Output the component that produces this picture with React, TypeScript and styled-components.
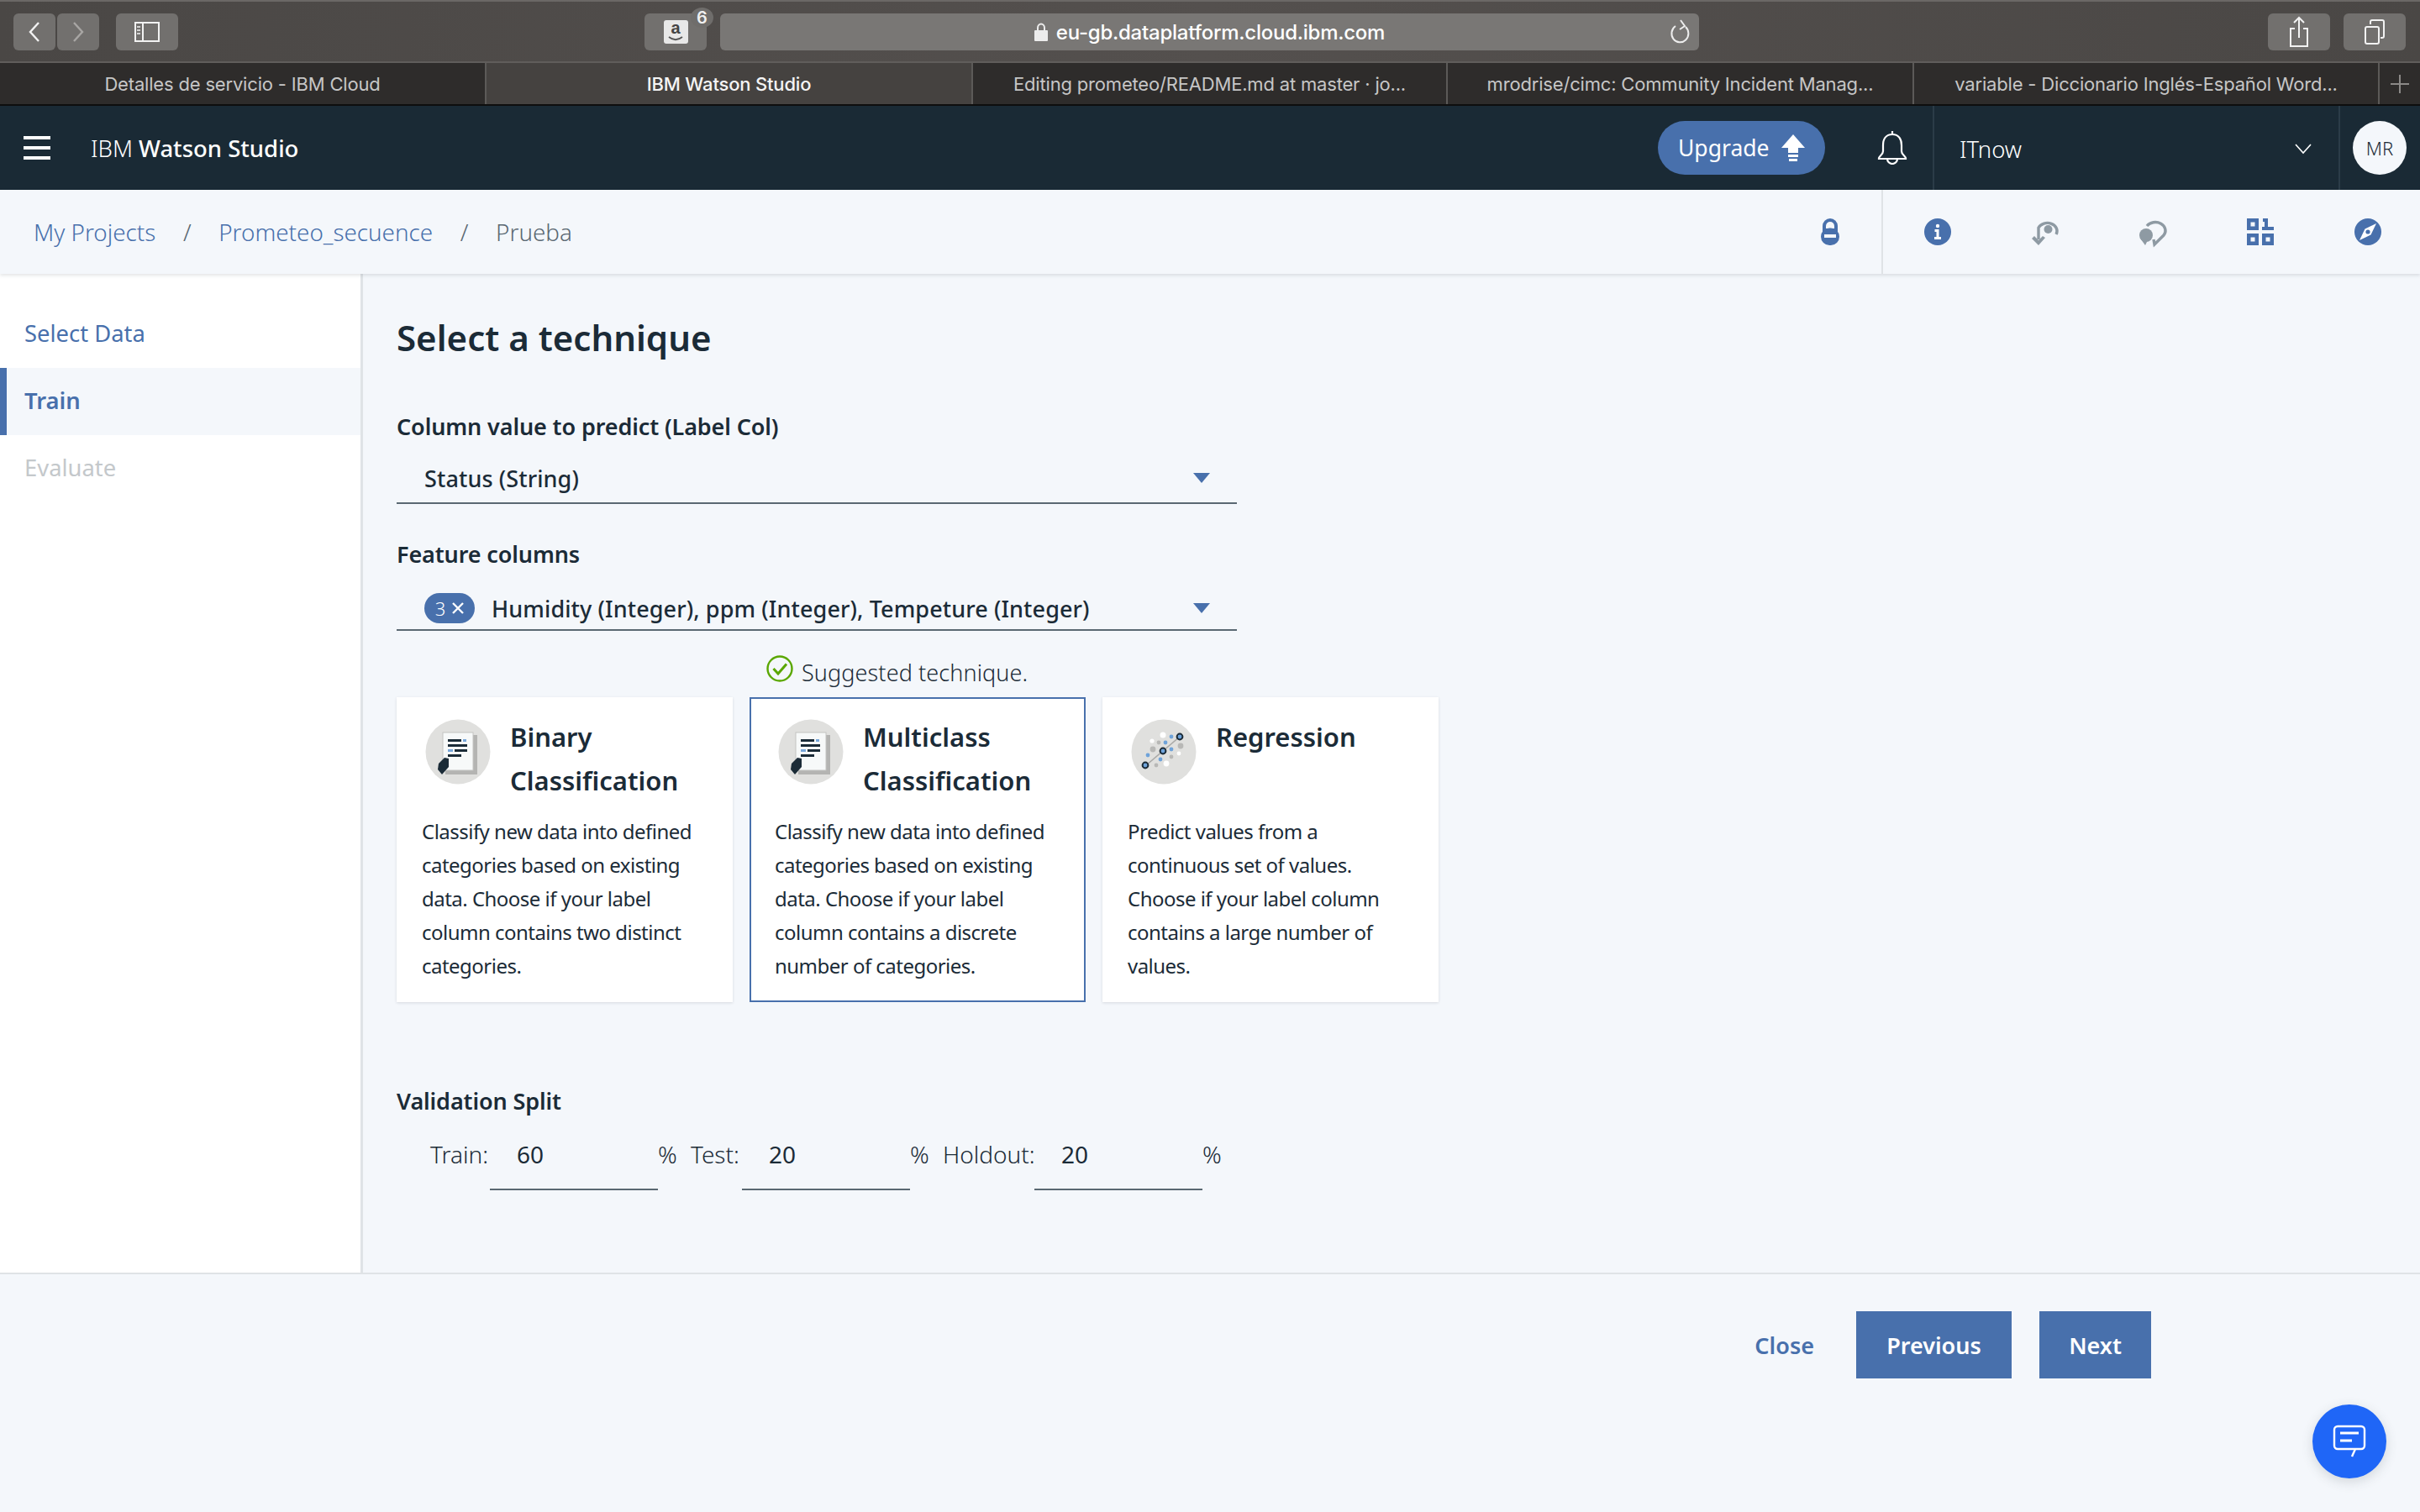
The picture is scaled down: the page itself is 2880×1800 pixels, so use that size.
import React from "react";
import styled, { createGlobalStyle } from "styled-components";

const BLUE = "#4870ac";
const INK = "#1b2b37";
const PLEX = `"Noto Sans", Roboto, "Liberation Sans", sans-serif`;
const UI = `Inter, "Liberation Sans", sans-serif`;

const Global = createGlobalStyle`
  html, body { margin: 0; padding: 0; background: #f4f7fb; }
  * { box-sizing: border-box; }
  svg { flex: none; }
`;

const Page = styled.div`
  position: relative;
  display: flex;
  flex-direction: column;
  height: 100vh;
  overflow: hidden;
  font-family: ${PLEX};
  color: ${INK};
  background: #f4f7fb;
`;

/* ---- browser chrome ---- */
const Toolbar = styled.div`
  height: 75px;
  display: flex;
  align-items: flex-start;
  padding: 16px 17px 0 16px;
  background: linear-gradient(90deg, #4a4745, #54504e 50%, #4a4745);
  border-top: 2px solid #6b6866;
  border-bottom: 2px solid #605d5b;
`;
const ToolButton = styled.div<{ $w: number; $ml?: number }>`
  position: relative;
  width: ${(p) => p.$w}px;
  height: 44px;
  margin-top: -2px;
  margin-left: ${(p) => p.$ml ?? 0}px;
  flex: none;
  display: flex;
  align-items: center;
  justify-content: center;
  border-radius: 6px;
  background: #72706e;
`;
const Counter = styled.span`
  position: absolute;
  top: -7px;
  right: -8px;
  width: 27px;
  height: 24px;
  border-radius: 50%;
  background: #6f6d6b;
  color: #f0f0f0;
  font: 600 20px ${UI};
  display: flex;
  align-items: center;
  justify-content: center;
`;
const AmazonTile = styled.span`
  width: 29px;
  height: 28px;
  border-radius: 3px;
  background: #e8e8e8;
  color: #444;
  font: 700 20px/19px "Liberation Sans", sans-serif;
  display: flex;
  flex-direction: column;
  align-items: center;
`;
const UrlBar = styled.div`
  position: relative;
  flex: 1;
  height: 44px;
  margin: -2px 0 0 16px;
  display: flex;
  align-items: center;
  justify-content: center;
  gap: 10px;
  border-radius: 6px;
  background: #797775;
  color: #fff;
  font: 500 24px ${UI};
  letter-spacing: -0.25px;
`;
const Reload = styled.span`
  position: absolute;
  right: 10px;
  top: 7px;
  display: flex;
`;
const ToolSpacer = styled.div`
  width: 555px;
  flex: none;
  height: 1px;
`;
const TabStrip = styled.div`
  height: 51px;
  display: grid;
  grid-template-columns: 579px 579px 565px 555px 554px 48px;
  background: #2e2c2b;
  border-bottom: 2px solid #0e0e0e;
`;
const Tab = styled.div<{ $active?: boolean }>`
  display: flex;
  align-items: center;
  justify-content: center;
  white-space: nowrap;
  overflow: hidden;
  font: ${(p) => (p.$active ? 500 : 400)} 22px ${UI};
  letter-spacing: -0.18px;
  color: ${(p) => (p.$active ? "#f4f4f4" : "#c6c6c6")};
  background: ${(p) => (p.$active ? "#454240" : "#2e2c2b")};
  border-right: 2px solid #5c5a58;
`;
const PlusTab = styled(Tab)`
  border-right: 0;
`;

/* ---- product bar ---- */
const NavBar = styled.header`
  height: 100px;
  flex: none;
  display: flex;
  align-items: center;
  background: #1a2a35;
  color: #fff;
`;
const Burger = styled.div`
  margin-left: 28px;
  width: 32px;
  display: flex;
  flex-direction: column;
  gap: 8px;
  & > i {
    display: block;
    height: 4px;
    background: #fff;
  }
`;
const Brand = styled.div`
  margin-left: 48px;
  font-size: 27.5px;
  font-weight: 300;
  flex: 1;
  & > b {
    font-weight: 500;
  }
`;
const Upgrade = styled.div`
  width: 199px;
  height: 64px;
  display: flex;
  align-items: center;
  gap: 14px;
  padding-left: 24px;
  border-radius: 32px;
  background: ${BLUE};
  font-size: 26.5px;
  color: #fff;
  flex: none;
`;
const BellCell = styled.div`
  width: 128px;
  height: 100px;
  padding-left: 32px;
  display: flex;
  align-items: center;
  justify-content: center;
  flex: none;
`;
const Account = styled.div`
  width: 485px;
  height: 100px;
  flex: none;
  display: flex;
  align-items: center;
  justify-content: space-between;
  padding: 2px 32px 0 30px;
  border-left: 2px solid #2b3c48;
  border-right: 2px solid #2b3c48;
  font-size: 27.5px;
  font-weight: 300;
`;
const AvatarCell = styled.div`
  width: 95px;
  flex: none;
  padding-left: 15px;
`;
const Avatar = styled.div`
  width: 64px;
  height: 64px;
  border-radius: 50%;
  background: #f4f7fb;
  color: ${INK};
  display: flex;
  align-items: center;
  justify-content: center;
  font-size: 22px;
  font-weight: 300;
`;

/* ---- breadcrumb ---- */
const CrumbBar = styled.div`
  position: relative;
  z-index: 1;
  height: 100px;
  flex: none;
  display: flex;
  align-items: center;
  padding-left: 40px;
  background: #f4f7fb;
  box-shadow: 0 2px 4px rgba(60, 70, 80, 0.14);
  font-size: 27.8px;
  font-weight: 300;
`;
const Crumbs = styled.nav`
  flex: 1;
  display: flex;
  align-items: center;
`;
const CrumbLink = styled.span`
  color: ${BLUE};
`;
const CrumbSep = styled.span`
  width: 75px;
  text-align: center;
  color: #5a6872;
`;
const CrumbCurrent = styled.span`
  color: #5a6872;
`;
const LockCell = styled.div`
  margin-right: 50px;
  display: flex;
`;
const ActionGroup = styled.div`
  height: 100px;
  display: flex;
  align-items: center;
  gap: 96px;
  padding: 0 46px 0 49px;
  border-left: 2px solid #dfe3e6;
  & > svg {
    width: 32px;
  }
`;

/* ---- body ---- */
const Body = styled.div`
  flex: 1;
  min-height: 0;
  display: flex;
`;
const Side = styled.aside`
  width: 432px;
  flex: none;
  padding-top: 32px;
  background: #fff;
  border-right: 3px solid #dfe3e6;
`;
const SideItem = styled.div<{ $state?: "active" | "off" }>`
  height: 80px;
  display: flex;
  align-items: center;
  padding: 0 0 3px ${(p) => (p.$state === "active" ? 21 : 29)}px;
  font-size: 27.4px;
  font-weight: ${(p) => (p.$state === "active" ? 600 : 400)};
  color: ${(p) => (p.$state === "off" ? "#c4c8cb" : BLUE)};
  background: ${(p) => (p.$state === "active" ? "#f4f7fb" : "#fff")};
  border-left: ${(p) => (p.$state === "active" ? `8px solid ${BLUE}` : "0")};
`;
const Main = styled.main`
  flex: 1;
  padding: 46px 0 0 40px;
`;
const Title = styled.h1`
  margin: 0 0 58px;
  font-size: 42px;
  line-height: 60px;
  font-weight: 600;
`;
const Label = styled.div`
  font-size: 27px;
  line-height: 36px;
  font-weight: 600;
  letter-spacing: -0.12px;
`;
const SelectBox = styled.div<{ $h: number; $pad: number; $mb: number }>`
  width: 1000px;
  height: ${(p) => p.$h}px;
  display: flex;
  align-items: center;
  padding: ${(p) => p.$pad}px 32px 0 33px;
  margin-bottom: ${(p) => p.$mb}px;
  border-bottom: 2px solid #5a6872;
  font-size: 27px;
  font-weight: 500;
  letter-spacing: 0.1px;
`;
const SelectText = styled.span`
  flex: 1;
  white-space: nowrap;
`;
const Caret = styled.span`
  width: 0;
  height: 0;
  border-left: 10px solid transparent;
  border-right: 10px solid transparent;
  border-top: 12px solid ${BLUE};
`;
const Count = styled.span`
  width: 60px;
  height: 36px;
  margin-right: 20px;
  display: flex;
  align-items: center;
  justify-content: center;
  gap: 8px;
  border-radius: 18px;
  background: ${BLUE};
  color: #fff;
  font-size: 22px;
  font-weight: 300;
`;
const Suggest = styled.div`
  height: 40px;
  margin: 29px 0 10px;
  padding-left: 440px;
  display: flex;
  align-items: center;
  gap: 10px;
  font-size: 27px;
  font-weight: 300;
  letter-spacing: 0.1px;
  & > svg {
    margin-top: -9px;
  }
`;
const Cards = styled.div`
  display: grid;
  grid-template-columns: repeat(3, 400px);
  gap: 20px;
`;
const Card = styled.article<{ $on?: boolean }>`
  height: 363px;
  padding: 24px 20px 0 28px;
  background: #fff;
  border: 2px solid ${(p) => (p.$on ? BLUE : "#fff")};
  box-shadow: ${(p) => (p.$on ? "none" : "0 1px 3px rgba(60, 70, 80, 0.16)")};
`;
const CardHead = styled.div`
  display: flex;
  gap: 23px;
  height: 110px;
  margin-left: 4px;
`;
const CardTitle = styled.h2`
  margin: -5px 0 0;
  font-size: 31px;
  line-height: 52px;
  font-weight: 600;
`;
const CardText = styled.p`
  margin: 4px 0 0 0;
  font-size: 24px;
  line-height: 40px;
  font-weight: 400;
  letter-spacing: -0.52px;
  white-space: pre-line;
`;
const SplitLabel = styled(Label)`
  margin-top: 100px;
`;
const SplitRow = styled.div`
  display: grid;
  grid-template-columns: 71px 200px 39px 61px 200px 39px 109px 200px auto;
  margin: 0 0 0 40px;
  height: 88px;
  font-size: 28px;
  font-weight: 300;
`;
const SplitText = styled.span`
  padding-top: 25px;
  line-height: 40px;
`;
const SplitInput = styled.span`
  padding: 25px 0 0 32px;
  line-height: 40px;
  font-weight: 400;
  border-bottom: 2px solid #5a6872;
`;
const Footer = styled.footer`
  flex: none;
  height: 285px;
  display: flex;
  justify-content: flex-end;
  align-items: flex-start;
  gap: 33px;
  padding: 44px 320px 0 0;
  background: #f4f7fb;
  border-top: 2px solid #dfe3e6;
`;
const CloseLink = styled.span`
  height: 80px;
  margin-right: 17px;
  display: flex;
  align-items: center;
  color: ${BLUE};
  font-size: 27px;
  font-weight: 600;
`;
const Primary = styled.button<{ $w: number }>`
  width: ${(p) => p.$w}px;
  height: 80px;
  border: 0;
  background: ${BLUE};
  color: #fff;
  font: 600 27px ${PLEX};
  padding: 0;
`;
const Fab = styled.div`
  position: absolute;
  right: 40px;
  bottom: 40px;
  width: 88px;
  height: 88px;
  border-radius: 50%;
  background: #1f66f7;
  box-shadow: 0 4px 14px rgba(60, 70, 80, 0.18);
  display: flex;
  align-items: center;
  justify-content: center;
`;

/* ---- drawings ---- */
const DocIcon = () => (
  <svg width="78" height="78" viewBox="0 0 78 78">
    <circle cx="39" cy="39" r="38.5" fill="#e0e0de" />
    <path d="M24 19 H62 V66 H24 Z" fill="#b4b4b2" />
    <rect x="21" y="16" width="36" height="45" fill="#f7f9f9" stroke="#c4c4c2" strokeWidth="1" />
    <rect x="27" y="24" width="16" height="3" fill={INK} />
    <rect x="45" y="24" width="4" height="3" fill="#79a7da" />
    <rect x="27" y="30" width="23" height="3" fill={INK} />
    <rect x="27" y="36" width="6" height="3" fill="#79a7da" />
    <rect x="35" y="36" width="15" height="3" fill={INK} />
    <rect x="27" y="42" width="16" height="3" fill={INK} />
    <path d="M23 46 L16 53 L15 60 L20 66 L28 57 L28 47 Z" fill={INK} />
  </svg>
);
const RegressionIcon = () => {
  const pts: [number, number, number, string][] = [
    [38, 19, 3.5, "#fff"], [25, 26, 2.6, "#fff"], [33, 28, 2.4, "#b8b8b6"], [41, 28, 2.4, "#6fa3da"],
    [48, 21, 2.4, "#6fa3da"], [59, 32, 3.4, "#b8b8b6"], [26, 36, 3.4, "#b8b8b6"], [48, 36, 2.4, "#6fa3da"],
    [20, 43, 2.4, "#6fa3da"], [35, 48, 2.4, "#6fa3da"], [48, 45, 2.4, "#b8b8b6"], [57, 41, 2.4, "#fff"],
    [42, 53, 3.4, "#fff"], [30, 55, 2.4, "#b8b8b6"],
  ];
  return (
    <svg width="78" height="78" viewBox="0 0 78 78">
      <circle cx="39" cy="39" r="38.5" fill="#e0e0de" />
      <line x1="18" y1="55" x2="58" y2="21" stroke="#a8a8a6" strokeWidth="1.6" />
      {pts.map(([x, y, r, c]) => (
        <circle key={`${x}-${y}`} cx={x} cy={y} r={r} fill={c} />
      ))}
      {[[17, 55], [38, 38], [58, 21]].map(([x, y]) => (
        <circle key={x} cx={x} cy={y} r="3.4" fill="#6fa3da" stroke={INK} strokeWidth="2" />
      ))}
    </svg>
  );
};
const Gray = "#8e9aa3";
const LockIcon = () => (
  <svg width="22" height="32" viewBox="0 0 22 32">
    <path d="M2 16 V9 a9 9 0 0 1 18 0 V16 Z" fill={BLUE} />
    <path d="M6 12 V9 a5 5 0 0 1 10 0 V12 Z" fill="#f4f7fb" />
    <rect x="0" y="11.5" width="22" height="20.5" rx="10.2" fill={BLUE} />
    <rect x="4" y="19" width="14" height="4" fill="#f4f7fb" />
  </svg>
);
const InfoIcon = () => (
  <svg width="32" height="32" viewBox="0 0 32 32">
    <circle cx="16" cy="16" r="16" fill={BLUE} />
    <circle cx="16" cy="9" r="2.2" fill="#fff" />
    <path d="M12.5 13 H17.5 V22 H20 V25 H12 V22 H14.5 V16 H12.5 Z" fill="#fff" />
  </svg>
);
const RewindIcon = () => (
  <svg height="32" viewBox="0 0 32 32" overflow="visible">
    <circle cx="19.5" cy="13" r="5" fill={Gray} />
    <path d="M8 25 V11 a11.5 9.5 0 1 1 21 8" fill="none" stroke={Gray} strokeWidth="3.4" />
    <path d="M0 24 L8 32 L16 23 L13 21 L8 26 L3 21 Z" fill={Gray} />
  </svg>
);
const ForwardIcon = () => (
  <svg height="32" viewBox="0 0 32 32" overflow="visible">
    <path d="M9 9 a11.5 9.5 0 1 1 20 11 L18 31 L17 25" fill="none" stroke={Gray} strokeWidth="3.4" />
    <circle cx="8" cy="20" r="8" fill={Gray} />
    <path d="M0.5 23 L7 32 L10 26 Z" fill={Gray} />
  </svg>
);
const BitsIcon = () => (
  <svg width="32" height="32" viewBox="0 0 32 32" fill={BLUE}>
    <path fillRule="evenodd" d="M0 0 H14 V14 H0 Z M4.5 4.5 V9.5 H9.5 V4.5 Z" />
    <path d="M19 0 H25 V10 H32 V14 H18 V10 H21 V4 H19 Z" />
    <path fillRule="evenodd" d="M0 18 H14 V32 H0 Z M4.5 22.5 V27.5 H9.5 V22.5 Z" />
    <path fillRule="evenodd" d="M18 18 H32 V32 H18 Z M22.5 22.5 V27.5 H27.5 V22.5 Z" />
  </svg>
);
const CompassIcon = () => (
  <svg width="32" height="32" viewBox="0 0 32 32">
    <circle cx="16" cy="16" r="16" fill={BLUE} />
    <path d="M26 6 L19.5 19.5 L6 26 L12.5 12.5 Z" fill="#fff" />
    <circle cx="16" cy="16" r="2.6" fill={BLUE} />
  </svg>
);
const Chevron = ({ left, dim }: { left?: boolean; dim?: boolean }) => (
  <svg width="16" height="26" viewBox="0 0 16 26">
    <path d={left ? "M13 2 L3 13 L13 24" : "M3 2 L13 13 L3 24"} fill="none" stroke={dim ? "#a8a6a4" : "#f2f2f2"} strokeWidth="2.4" />
  </svg>
);

const tabs = [
  "Detalles de servicio - IBM Cloud",
  "IBM Watson Studio",
  "Editing prometeo/README.md at master · jo...",
  "mrodrise/cimc: Community Incident Manag...",
  "variable - Diccionario Inglés-Español Word...",
];

export default function App() {
  return (
    <Page>
      <Global />
      <Toolbar>
        <ToolButton $w={50}><Chevron left /></ToolButton>
        <ToolButton $w={50} $ml={2}><Chevron dim /></ToolButton>
        <ToolButton $w={74} $ml={20}>
          <svg width="32" height="26" viewBox="0 0 32 26" fill="none" stroke="#f2f2f2" strokeWidth="2">
            <rect x="2" y="2" width="28" height="22" />
            <line x1="11" y1="2" x2="11" y2="24" />
            <path d="M4 7 H8 M4 11 H8 M4 15 H8" strokeWidth="1.6" />
          </svg>
        </ToolButton>
        <ToolSpacer />
        <ToolButton $w={74}>
          <AmazonTile>
            a
            <svg width="20" height="6" viewBox="0 0 20 6" fill="none" stroke="#555" strokeWidth="1.8">
              <path d="M2 1 C7 5 13 5 18 1" />
            </svg>
          </AmazonTile>
          <Counter>6</Counter>
        </ToolButton>
        <UrlBar>
          <svg width="16" height="22" viewBox="0 0 16 22">
            <path d="M4 10 V6 a4 4.5 0 0 1 8 0 V10" fill="none" stroke="#ececec" strokeWidth="2" />
            <rect x="0" y="9" width="16" height="13" rx="1" fill="#ececec" />
          </svg>
          eu-gb.dataplatform.cloud.ibm.com
          <Reload>
            <svg width="26" height="30" viewBox="0 0 26 30" fill="none" stroke="#ededed" strokeWidth="2">
              <path d="M8 8 A10 10.5 0 1 0 20 9" />
              <path d="M14 1 L19 8 L13 12" />
            </svg>
          </Reload>
        </UrlBar>
        <ToolButton $w={74} $ml={677}>
          <svg width="24" height="38" viewBox="0 0 24 38" fill="none" stroke="#f2f2f2" strokeWidth="2">
            <path d="M7 15 H2 V36 H22 V15 H17" />
            <path d="M12 26 V2 M6 8 L12 2 L18 8" />
          </svg>
        </ToolButton>
        <ToolButton $w={74} $ml={16}>
          <svg width="26" height="30" viewBox="0 0 26 30" fill="none" stroke="#f2f2f2" strokeWidth="2">
            <rect x="2" y="9" width="16" height="20" rx="2" />
            <path d="M8 6 V3 a2 2 0 0 1 2-2 H22 a2 2 0 0 1 2 2 V20 a2 2 0 0 1-2 2 H20" />
          </svg>
        </ToolButton>
      </Toolbar>
      <TabStrip>
        {tabs.map((t, i) => (
          <Tab key={t} $active={i === 1}>{t}</Tab>
        ))}
        <PlusTab>
          <svg width="24" height="24" viewBox="0 0 24 24" stroke="#8b8987" strokeWidth="2">
            <path d="M12 1 V23 M1 12 H23" />
          </svg>
        </PlusTab>
      </TabStrip>

      <NavBar>
        <Burger><i /><i /><i /></Burger>
        <Brand>IBM <b>Watson Studio</b></Brand>
        <Upgrade>
          Upgrade
          <svg width="28" height="32" viewBox="0 0 28 32" fill="#fff">
            <path d="M14 0 L28 16 H20 V22 H8 V16 H0 Z" />
            <rect x="8" y="24" width="12" height="3" />
            <rect x="9" y="29" width="10" height="3" />
          </svg>
        </Upgrade>
        <BellCell>
          <svg width="36" height="40" viewBox="0 0 36 40" fill="none" stroke="#fff" strokeWidth="2.2">
            <path d="M18 0 V4" />
            <path d="M18 4 C10 4 7 10 7 17 V24 C7 28 3 29 2 32 V33 H34 V32 C33 29 29 28 29 24 V17 C29 10 26 4 18 4 Z" />
            <path d="M12 33 a6 6 0 0 0 12 0" />
          </svg>
        </BellCell>
        <Account>
          ITnow
          <svg width="20" height="14" viewBox="0 0 20 14" fill="none" stroke="#fff" strokeWidth="1.6">
            <path d="M1 2 L10 12 L19 2" />
          </svg>
        </Account>
        <AvatarCell><Avatar>MR</Avatar></AvatarCell>
      </NavBar>

      <CrumbBar>
        <Crumbs>
          <CrumbLink>My Projects</CrumbLink>
          <CrumbSep>/</CrumbSep>
          <CrumbLink>Prometeo_secuence</CrumbLink>
          <CrumbSep>/</CrumbSep>
          <CrumbCurrent>Prueba</CrumbCurrent>
        </Crumbs>
        <LockCell><LockIcon /></LockCell>
        <ActionGroup>
          <InfoIcon />
          <RewindIcon />
          <ForwardIcon />
          <BitsIcon />
          <CompassIcon />
        </ActionGroup>
      </CrumbBar>

      <Body>
        <Side>
          <SideItem>Select Data</SideItem>
          <SideItem $state="active">Train</SideItem>
          <SideItem $state="off">Evaluate</SideItem>
        </Side>
        <Main>
          <Title>Select a technique</Title>
          <Label>Column value to predict (Label Col)</Label>
          <SelectBox $h={74} $pad={14} $mb={42}>
            <SelectText>Status (String)</SelectText>
            <Caret />
          </SelectBox>
          <Label>Feature columns</Label>
          <SelectBox $h={73} $pad={21} $mb={0}>
            <Count>
              3
              <svg width="14" height="14" viewBox="0 0 14 14" stroke="#fff" strokeWidth="2.4">
                <path d="M1 1 L13 13 M13 1 L1 13" />
              </svg>
            </Count>
            <SelectText>Humidity (Integer), ppm (Integer), Tempeture (Integer)</SelectText>
            <Caret />
          </SelectBox>
          <Suggest>
            <svg width="32" height="32" viewBox="0 0 32 32" fill="none" stroke="#5aa700">
              <circle cx="16" cy="16" r="14.5" strokeWidth="2.4" />
              <path d="M8.5 16 L14 22 L24 10.5" strokeWidth="3" />
            </svg>
            Suggested technique.
          </Suggest>
          <Cards>
            <Card>
              <CardHead>
                <DocIcon />
                <CardTitle>Binary Classification</CardTitle>
              </CardHead>
              <CardText>{"Classify new data into defined\ncategories based on existing\ndata. Choose if your label\ncolumn contains two distinct\ncategories."}</CardText>
            </Card>
            <Card $on>
              <CardHead>
                <DocIcon />
                <CardTitle>Multiclass Classification</CardTitle>
              </CardHead>
              <CardText>{"Classify new data into defined\ncategories based on existing\ndata. Choose if your label\ncolumn contains a discrete\nnumber of categories."}</CardText>
            </Card>
            <Card>
              <CardHead>
                <RegressionIcon />
                <CardTitle>Regression</CardTitle>
              </CardHead>
              <CardText>{"Predict values from a\ncontinuous set of values.\nChoose if your label column\ncontains a large number of\nvalues."}</CardText>
            </Card>
          </Cards>
          <SplitLabel>Validation Split</SplitLabel>
          <SplitRow>
            <SplitText>Train:</SplitText>
            <SplitInput>60</SplitInput>
            <SplitText>%</SplitText>
            <SplitText>Test:</SplitText>
            <SplitInput>20</SplitInput>
            <SplitText>%</SplitText>
            <SplitText>Holdout:</SplitText>
            <SplitInput>20</SplitInput>
            <SplitText>%</SplitText>
          </SplitRow>
        </Main>
      </Body>

      <Footer>
        <CloseLink>Close</CloseLink>
        <Primary $w={185}>Previous</Primary>
        <Primary $w={133}>Next</Primary>
      </Footer>
      <Fab>
        <svg width="40" height="40" viewBox="0 0 40 40" fill="none" stroke="#fff" strokeWidth="2.4">
          <rect x="2" y="2" width="36" height="27" rx="4" />
          <path d="M27 29 L23 38" />
          <path d="M9 10 H31 M9 19 H23" strokeWidth="3" />
        </svg>
      </Fab>
    </Page>
  );
}
